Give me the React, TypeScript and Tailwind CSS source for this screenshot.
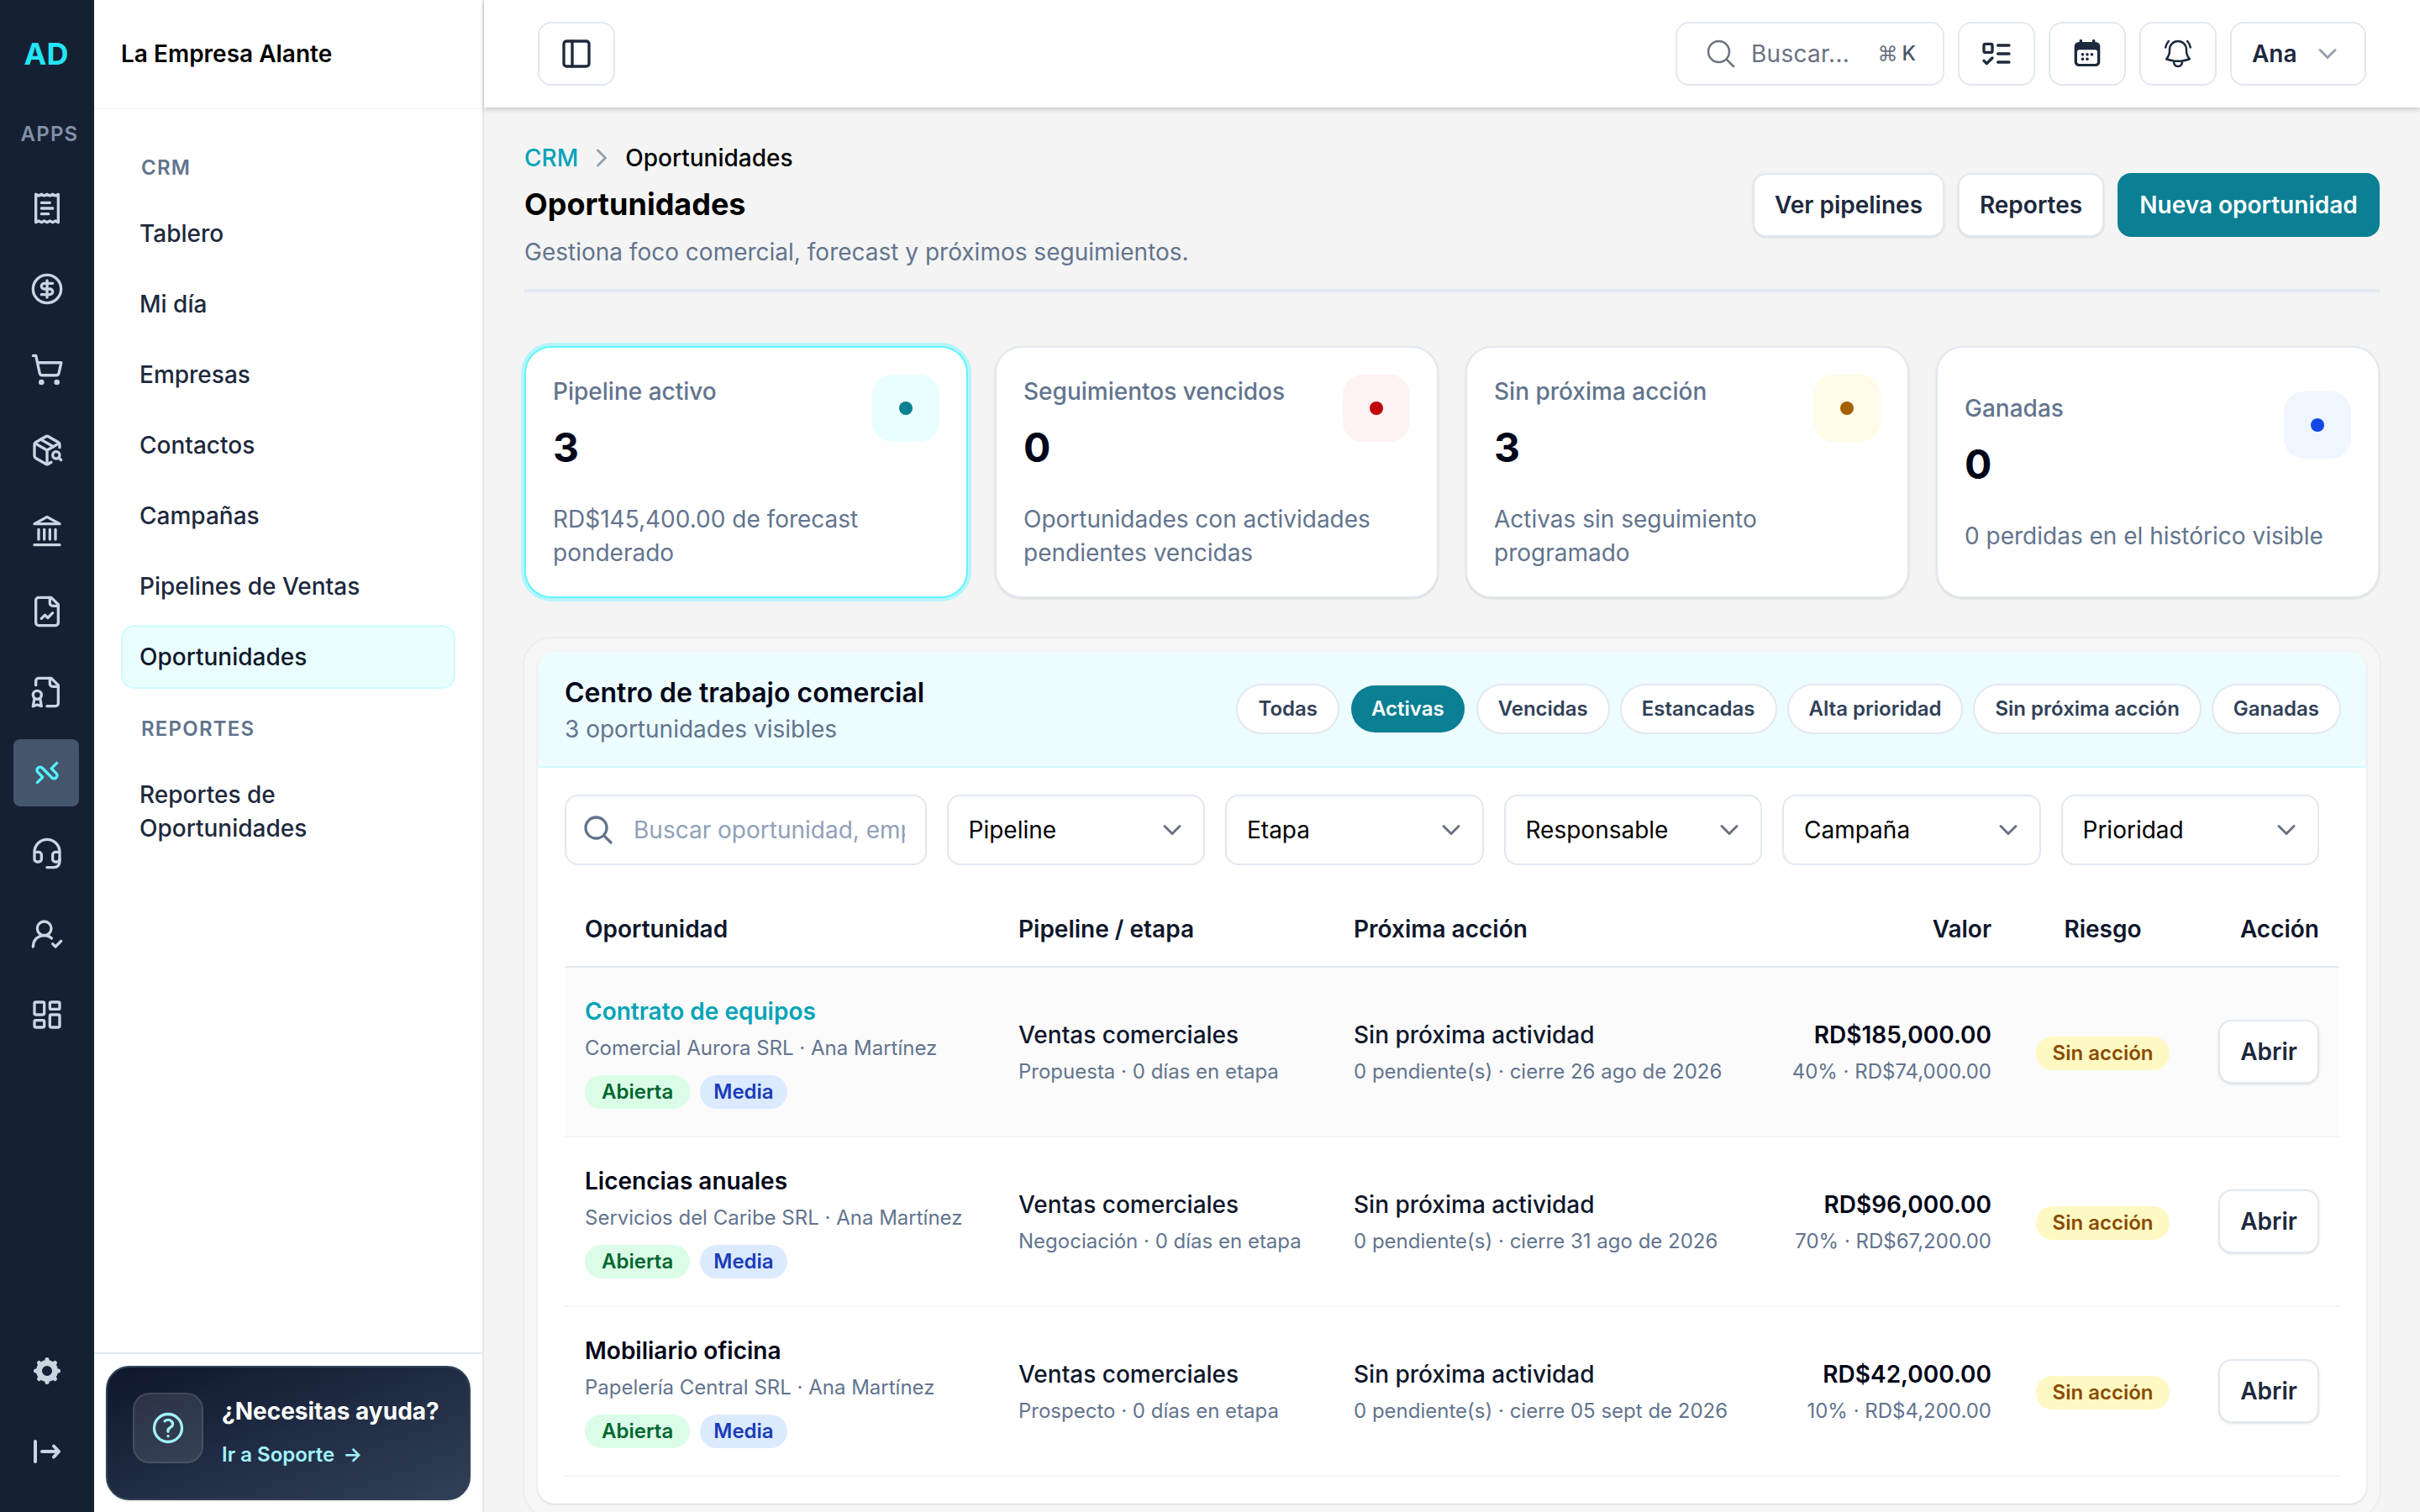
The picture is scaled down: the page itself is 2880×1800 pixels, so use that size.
import React from 'react';
import { CircleDollarSign, Headset, LayoutDashboard, PackageSearch, ShoppingCart, UserRoundCheck } from 'lucide-react';
import { HiOutlineBellAlert, HiOutlineMagnifyingGlass, HiOutlineQuestionMarkCircle } from 'react-icons/hi2';

type IconProps = { className?: string };

function StrokeIcon({ className, children }: IconProps & { children: React.ReactNode }) {
  return (
    <svg
      className={className}
      viewBox="0 0 24 24"
      fill="none"
      stroke="currentColor"
      strokeWidth={2}
      strokeLinecap="round"
      strokeLinejoin="round"
    >
      {children}
    </svg>
  );
}

const ReceiptIcon = ({ className }: IconProps) => (
  <StrokeIcon className={className}>
    <path d="M4 2v20l2-1 2 1 2-1 2 1 2-1 2 1 2-1 2 1V2l-2 1-2-1-2 1-2-1-2 1-2-1-2 1Z" />
    <path d="M14 8H8M16 12H8M13 16H8" />
  </StrokeIcon>
);

const BankIcon = ({ className }: IconProps) => (
  <StrokeIcon className={className}>
    <path d="M3 22h18M6 18v-7M10 18v-7M14 18v-7M18 18v-7" />
    <path d="m12 2 9 5H3Z" />
  </StrokeIcon>
);

const FileChartIcon = ({ className }: IconProps) => (
  <StrokeIcon className={className}>
    <path d="M15 2H6a2 2 0 0 0-2 2v16a2 2 0 0 0 2 2h12a2 2 0 0 0 2-2V7Z" />
    <path d="M14 2v4a2 2 0 0 0 2 2h4" />
    <path d="m16 13-3.5 3.5-2-2L8 17" />
  </StrokeIcon>
);

const FileBadgeIcon = ({ className }: IconProps) => (
  <StrokeIcon className={className}>
    <path d="M12 22h6a2 2 0 0 0 2-2V7l-5-5H6a2 2 0 0 0-2 2v3" />
    <path d="M14 2v4a2 2 0 0 0 2 2h4" />
    <circle cx="5" cy="14" r="3" />
    <path d="M7 16.5 8 22l-3-1-3 1 1-5.5" />
  </StrokeIcon>
);

const CrmIcon = ({ className }: IconProps) => (
  <StrokeIcon className={className}>
    <path d="m5 19 3.9-3.9-3.46-3.44a2.2 2.2 0 0 1 3.12-3.12l6.88 6.92a2.2 2.2 0 0 0 3.12-3.12L15.1 8.9 19 5" />
  </StrokeIcon>
);

const TodoIcon = ({ className }: IconProps) => (
  <StrokeIcon className={className}>
    <rect x="3" y="5" width="6" height="6" rx="1" />
    <path d="m3 17 2 2 4-4M13 6h8M13 12h8M13 18h8" />
  </StrokeIcon>
);

const CalendarIcon = ({ className }: IconProps) => (
  <svg className={className} viewBox="0 0 24 24" fill="currentColor">
    <path
      fillRule="evenodd"
      d="M7.4 1.6a1 1 0 0 1 1 1v1h7.2v-1a1 1 0 0 1 2 0v1h.4a3.2 3.2 0 0 1 3.2 3.2v11a3.2 3.2 0 0 1-3.2 3.2H6a3.2 3.2 0 0 1-3.2-3.2v-11A3.2 3.2 0 0 1 6 3.6h.4v-1a1 1 0 0 1 1-1ZM6.4 9.2a1.6 1.6 0 0 0-1.6 1.6v6.8a1.6 1.6 0 0 0 1.6 1.6h11.2a1.6 1.6 0 0 0 1.6-1.6v-6.8a1.6 1.6 0 0 0-1.6-1.6Z"
    />
    <circle cx="8.7" cy="12.5" r="1.1" />
    <circle cx="12" cy="12.5" r="1.1" />
    <circle cx="15.3" cy="12.5" r="1.1" />
    <circle cx="8.7" cy="15.8" r="1.1" />
    <circle cx="12" cy="15.8" r="1.1" />
  </svg>
);

const GearIcon = ({ className }: IconProps) => (
  <svg className={className} viewBox="0 0 40 40" fill="none" stroke="currentColor" strokeLinecap="round">
    <circle cx="20" cy="20" r="9.5" strokeWidth="7" />
    <path
      d="M20 8.500V6.500M20 31.500v2M8.500 20H6.500M31.500 20h2M12 12l-1.500-1.500M28 12l1.500-1.500M12 28l-1.500 1.500M28 28l1.500 1.500"
      strokeWidth="5"
    />
  </svg>
);

const LogoutIcon = ({ className }: IconProps) => (
  <svg
    className={className}
    viewBox="0 0 40 40"
    fill="none"
    stroke="currentColor"
    strokeWidth="4"
    strokeLinecap="round"
    strokeLinejoin="round"
  >
    <path d="M6 8v24M14 20h20M28 13.500 34 20l-6 6.500" />
  </svg>
);

const ChevronDown = ({ className }: IconProps) => (
  <StrokeIcon className={className}>
    <path d="m6 9 6 6 6-6" />
  </StrokeIcon>
);

const apps = [
  { name: 'Facturación', icon: ReceiptIcon },
  { name: 'Ingresos', icon: CircleDollarSign },
  { name: 'Compras', icon: ShoppingCart },
  { name: 'Inventario', icon: PackageSearch },
  { name: 'Bancos', icon: BankIcon },
  { name: 'Informes', icon: FileChartIcon },
  { name: 'Comprobantes', icon: FileBadgeIcon },
  { name: 'CRM', icon: CrmIcon, active: true },
  { name: 'Soporte', icon: Headset },
  { name: 'Usuarios', icon: UserRoundCheck },
  { name: 'Panel', icon: LayoutDashboard },
];

const menu = ['Tablero', 'Mi día', 'Empresas', 'Contactos', 'Campañas', 'Pipelines de Ventas', 'Oportunidades'];

const stats = [
  { label: 'Pipeline activo', value: '3', hint: 'RD$145,400.00 de forecast ponderado', box: 'bg-[#e9fefe]', dot: 'bg-[#0b7f93]', active: true },
  { label: 'Seguimientos vencidos', value: '0', hint: 'Oportunidades con actividades pendientes vencidas', box: 'bg-red-50', dot: 'bg-red-700' },
  { label: 'Sin próxima acción', value: '3', hint: 'Activas sin seguimiento programado', box: 'bg-yellow-50', dot: 'bg-yellow-700' },
  { label: 'Ganadas', value: '0', hint: '0 perdidas en el histórico visible', box: 'bg-blue-50', dot: 'bg-blue-700' },
];

const views = ['Todas', 'Activas', 'Vencidas', 'Estancadas', 'Alta prioridad', 'Sin próxima acción', 'Ganadas'];

const filters = ['Pipeline', 'Etapa', 'Responsable', 'Campaña', 'Prioridad'];

const rows = [
  { name: 'Contrato de equipos', account: 'Comercial Aurora SRL · Ana Martínez', stage: 'Propuesta', close: '26 ago de 2026', value: 'RD$185,000.00', weighted: '40% · RD$74,000.00', hover: true },
  { name: 'Licencias anuales', account: 'Servicios del Caribe SRL · Ana Martínez', stage: 'Negociación', close: '31 ago de 2026', value: 'RD$96,000.00', weighted: '70% · RD$67,200.00' },
  { name: 'Mobiliario oficina', account: 'Papelería Central SRL · Ana Martínez', stage: 'Prospecto', close: '05 sept de 2026', value: 'RD$42,000.00', weighted: '10% · RD$4,200.00' },
];

function AppRail() {
  return (
    <aside className="flex h-full w-[112px] shrink-0 flex-col items-center bg-[#162033] text-[#cad5e2]">
      <div className="flex h-[128px] items-center pr-[2px] text-[36px] leading-none font-bold text-[#22e5f5]">AD</div>
      <div className="mt-4 ml-[6px] text-[24px] leading-8 font-semibold tracking-[0.05em] text-[#8290a9]">APPS</div>
      <nav className="mt-8 flex w-full flex-col gap-4 pr-[18px] pl-4">
        {apps.map((app) => (
          <a
            key={app.name}
            aria-label={app.name}
            className={`flex h-20 items-center justify-center rounded-lg pl-[2px] ${app.active ? 'bg-[#45556c] text-[#53f3fd]' : ''}`}
          >
            <app.icon className="size-10" />
          </a>
        ))}
      </nav>
      <div className="mt-auto flex flex-col items-center gap-14 pb-[52px]">
        <GearIcon className="size-10" />
        <LogoutIcon className="size-10" />
      </div>
    </aside>
  );
}

function Sidebar() {
  return (
    <aside className="flex h-full w-[464px] shrink-0 flex-col border-r-2 border-slate-200 bg-white">
      <div className="flex h-[130px] items-center border-b-2 border-[#f6f6f6] px-8 text-[28px] font-semibold text-black">
        La Empresa Alante
      </div>
      <div className="flex flex-1 flex-col px-8 pt-[22px]">
        <h3 className="h-[88px] pt-8 pl-6 text-[24px] leading-8 font-semibold tracking-[0.05em] text-slate-500">CRM</h3>
        <nav className="flex flex-col gap-2">
          {menu.map((item) => (
            <a
              key={item}
              className={`flex h-[76px] items-center rounded-2xl border-2 px-5 text-[28px] font-medium ${
                item === 'Oportunidades' ? 'border-cyan-100 bg-[#e9fefe] text-slate-900' : 'border-transparent text-slate-800'
              }`}
            >
              {item}
            </a>
          ))}
        </nav>
        <h3 className="h-[88px] pt-8 pl-6 text-[24px] leading-8 font-semibold tracking-[0.05em] text-slate-500">REPORTES</h3>
        <a className="w-[320px] px-[22px] py-[18px] text-[28px] leading-10 font-medium text-slate-800">
          Reportes de Oportunidades
        </a>
      </div>
      <div className="border-t-2 border-slate-200 p-[14px]">
        <div className="flex h-[160px] gap-[22px] rounded-[28px] border-2 border-slate-700 bg-linear-to-br from-slate-900 via-[#202c44] to-slate-700 p-[30px] shadow-sm">
          <div className="flex size-[84px] shrink-0 items-center justify-center rounded-[20px] border-2 border-white/10 bg-white/10">
            <HiOutlineQuestionMarkCircle className="size-11 stroke-[1.8] text-cyan-200" />
          </div>
          <div className="pt-[2px] whitespace-nowrap">
            <p className="text-[28px] leading-10 font-bold text-white">¿Necesitas ayuda?</p>
            <p className="mt-4 flex gap-[10px] text-[24px] leading-8 font-semibold text-cyan-200">
              <span>Ir a Soporte</span>
              <span>→</span>
            </p>
          </div>
        </div>
      </div>
    </aside>
  );
}

function TopBar() {
  const button = 'flex h-[76px] items-center rounded-2xl border-2 border-slate-200 bg-white';
  return (
    <header className="z-10 flex h-[128px] shrink-0 items-center justify-between bg-white px-16 text-slate-800 shadow-[0_2px_6px_rgba(0,0,0,0.2)]">
      <button className={`${button} px-6`}>
        <StrokeIcon className="size-10">
          <rect x="3" y="3" width="18" height="18" rx="2" />
          <path d="M9 3v18" />
        </StrokeIcon>
      </button>
      <div className="flex gap-4">
        <button className={`${button} w-[320px] px-8 text-[28px] text-gray-500`}>
          <HiOutlineMagnifyingGlass className="size-10" />
          <span className="ml-4 tracking-[0.01em]">Buscar...</span>
          <span className="ml-auto flex gap-[5px] text-[24px]">
            <span>⌘</span>
            <span className="font-medium text-gray-600">K</span>
          </span>
        </button>
        <button className={`${button} px-6`}><TodoIcon className="size-10" /></button>
        <button className={`${button} px-6`}><CalendarIcon className="size-10" /></button>
        <button className={`${button} px-6`}><HiOutlineBellAlert className="size-10" /></button>
        <button className={`${button} w-[162px] justify-between px-6 text-[28px] font-semibold`}>
          Ana
          <ChevronDown className="mr-[2px] size-9 text-gray-400" />
        </button>
      </div>
    </header>
  );
}

function PageHeader() {
  const button = 'flex h-[76px] items-center justify-center rounded-2xl border-2 text-[28px] font-semibold';
  return (
    <div className="flex h-[220px] items-center justify-between border-b-4 border-slate-200 pt-4">
      <div>
        <div className="flex items-center text-[28px] leading-10 font-medium">
          <span className="text-[#00a3b8]">CRM</span>
          <ChevronDown className="mx-[10px] size-9 -rotate-90 text-gray-400" />
          <span className="text-black">Oportunidades</span>
        </div>
        <h1 className="mt-[7px] text-[36px] leading-[56px] font-bold text-black">Oportunidades</h1>
        <p className="mt-[9px] text-[28px] leading-10 text-slate-500">Gestiona foco comercial, forecast y próximos seguimientos.</p>
      </div>
      <div className="flex gap-4">
        <button className={`${button} w-[228px] border-slate-200 bg-white text-slate-800 shadow-sm`}>Ver pipelines</button>
        <button className={`${button} w-[174px] border-slate-200 bg-white text-slate-800 shadow-sm`}>Reportes</button>
        <button className={`${button} w-[312px] border-[#0b7f93] bg-[#0b7f93] text-white`}>Nueva oportunidad</button>
      </div>
    </div>
  );
}

function StatCards() {
  return (
    <div className="mt-16 grid grid-cols-4 gap-8">
      {stats.map((stat) => (
        <div
          key={stat.label}
          className={`flex h-[300px] flex-col justify-center rounded-[32px] border-2 bg-white px-8 ${
            stat.active ? 'border-[#5ff4ff] ring-4 ring-[#5ff4ff]/40' : 'border-slate-200 shadow-sm'
          }`}
        >
          <div className="flex items-start justify-between">
            <div>
              <p className="text-[28px] leading-10 font-medium text-slate-500">{stat.label}</p>
              <p className="mt-[17px] text-[48px] leading-[60px] font-bold text-slate-950">{stat.value}</p>
            </div>
            <div className={`flex size-20 items-center justify-center rounded-3xl ${stat.box}`}>
              <span className={`size-4 rounded-full ${stat.dot}`} />
            </div>
          </div>
          <p className="mt-[35px] text-[28px] leading-10 text-slate-500">{stat.hint}</p>
        </div>
      ))}
    </div>
  );
}

function Filters() {
  return (
    <div className="mr-6 grid grid-cols-[minmax(0,1.4fr)_repeat(5,minmax(0,1fr))] gap-6 text-[28px]">
      <div className="flex h-[84px] items-center rounded-2xl border-2 border-slate-200 pr-6 pl-[18px]">
        <HiOutlineMagnifyingGlass className="size-10 shrink-0 stroke-2 text-slate-500" />
        <input
          className="ml-[22px] w-full min-w-0 bg-transparent outline-none placeholder:text-slate-400"
          placeholder="Buscar oportunidad, empresa..."
        />
      </div>
      {filters.map((filter) => (
        <div key={filter} className="flex h-[84px] items-center justify-between rounded-2xl border-2 border-slate-200 pr-[19px] pl-6 text-black">
          {filter}
          <ChevronDown className="size-9 text-gray-500" />
        </div>
      ))}
    </div>
  );
}

function DealsTable() {
  const cell = 'px-6 align-middle';
  return (
    <table className="mt-[31px] w-full table-fixed text-[28px] leading-10 text-slate-900">
      <colgroup>
        <col className="w-[516px]" />
        <col className="w-[399px]" />
        <col className="w-[513px]" />
        <col className="w-[294px]" />
        <col className="w-[217px]" />
        <col className="w-[173px]" />
      </colgroup>
      <thead>
        <tr className="h-[90px] border-b-2 border-slate-200">
          <th className={`${cell} text-left font-semibold`}>Oportunidad</th>
          <th className={`${cell} text-left font-semibold`}>Pipeline / etapa</th>
          <th className={`${cell} text-left font-semibold`}>Próxima acción</th>
          <th className={`${cell} text-right font-semibold`}>Valor</th>
          <th className={`${cell} text-center font-semibold`}>Riesgo</th>
          <th className={`${cell} text-right font-semibold`}>Acción</th>
        </tr>
      </thead>
      <tbody>
        {rows.map((row) => (
          <tr key={row.name} className={`h-[202px] border-b-2 border-[#f4f4f4] ${row.hover ? 'bg-[#fbfbfb]' : ''}`}>
            <td className={cell}>
              <p className={`font-semibold ${row.hover ? 'text-[#00a3b8]' : 'text-slate-950'}`}>{row.name}</p>
              <p className="mt-2 text-[24px] leading-8 text-slate-500">{row.account}</p>
              <div className="mt-4 flex gap-3 text-[24px] leading-8 font-semibold">
                <span className="rounded-full bg-green-100 px-5 py-1 text-green-800">Abierta</span>
                <span className="rounded-full bg-blue-100 px-4 py-1 text-blue-800">Media</span>
              </div>
            </td>
            <td className={cell}>
              <p className="font-medium">Ventas comerciales</p>
              <p className="mt-2 text-[24px] leading-8 text-slate-500">{row.stage} · 0 días en etapa</p>
            </td>
            <td className={cell}>
              <p className="font-medium">Sin próxima actividad</p>
              <p className="mt-2 text-[24px] leading-8 text-slate-500">0 pendiente(s) · cierre {row.close}</p>
            </td>
            <td className={`${cell} text-right`}>
              <p className="font-semibold text-slate-950">{row.value}</p>
              <p className="mt-2 text-[24px] leading-8 text-slate-500">{row.weighted}</p>
            </td>
            <td className={`${cell} pt-1`}>
              <div className="flex justify-center">
                <span className="rounded-full bg-yellow-100 px-5 py-1 text-[24px] leading-8 font-semibold whitespace-nowrap text-yellow-800">
                  Sin acción
                </span>
              </div>
            </td>
            <td className={cell}>
              <button className="ml-auto flex h-[76px] w-[120px] items-center justify-center rounded-2xl border-2 border-slate-200 bg-white font-semibold text-slate-800 shadow-sm">
                Abrir
              </button>
            </td>
          </tr>
        ))}
      </tbody>
    </table>
  );
}

function Workspace() {
  return (
    <section className="mt-12 rounded-[32px] bg-[#f6f6f6] p-4 ring-2 ring-[#ededed]">
      <div className="overflow-hidden rounded-[20px] bg-white pb-8 shadow-sm">
        <div className="flex h-[138px] items-center justify-between border-b-2 border-[#cefafe] bg-[#ecfcff] px-8">
          <div>
            <h2 className="pt-[2px] text-[32px] leading-[46px] font-semibold text-slate-950">Centro de trabajo comercial</h2>
            <p className="text-[28px] leading-10 text-slate-500">3 oportunidades visibles</p>
          </div>
          <div className="flex gap-4">
            {views.map((view) => (
              <button
                key={view}
                className={`h-14 rounded-full px-6 text-[24px] font-semibold ${
                  view === 'Activas' ? 'bg-[#0b7f93] text-white' : 'bg-white text-slate-700 ring-2 ring-slate-200'
                }`}
              >
                {view}
              </button>
            ))}
          </div>
        </div>
        <div className="px-8 pt-8">
          <Filters />
          <DealsTable />
        </div>
      </div>
    </section>
  );
}

export default function App() {
  return (
    <div className="flex h-[1800px] w-[2880px] overflow-hidden bg-[#f4f4f4] font-['Inter',sans-serif] antialiased">
      <AppRail />
      <Sidebar />
      <div className="flex min-w-0 flex-1 flex-col">
        <TopBar />
        <main className="min-h-0 flex-1 overflow-hidden px-12">
          <PageHeader />
          <StatCards />
          <Workspace />
        </main>
      </div>
    </div>
  );
}
